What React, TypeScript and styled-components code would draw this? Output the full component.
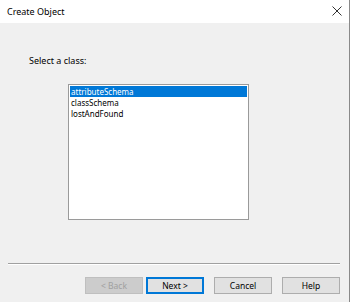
import styled, { createGlobalStyle } from "styled-components"

const items = ["attributeSchema", "classSchema", "lostAndFound"]

export default function App() {
    return (
        <>
            <GlobalStyle />
            <Dialog>
                <TitleBar>
                    <Title>Create Object</Title>
                    <Close>
                        <svg width="10" height="10" viewBox="0 0 10 10">
                            <path d="M0.5 0.5 L9.5 9.5 M9.5 0.5 L0.5 9.5" stroke="#333" strokeWidth="1" fill="none" />
                        </svg>
                    </Close>
                </TitleBar>
                <Body>
                    <Label>Select a class:</Label>
                    <ListBox>
                        {items.map((item, i) => (
                            <Item key={item} selected={i === 0}>{item}</Item>
                        ))}
                    </ListBox>
                    <Spacer />
                    <Separator />
                    <Buttons>
                        <Button disabled>&lt; Back</Button>
                        <Button primary>Next &gt;</Button>
                        <Button>Cancel</Button>
                        <Button>Help</Button>
                    </Buttons>
                </Body>
            </Dialog>
        </>
    )
}

const GlobalStyle = createGlobalStyle`
    html, body {
        margin: 0;
        padding: 0;
        background: #f0f0f0;
    }
    body {
        font-family: "Noto Sans", "Open Sans", sans-serif;
    }
`

const Dialog = styled.div`
    width: 350px;
    height: 302px;
    display: flex;
    flex-direction: column;
    background: #f0f0f0;
    box-sizing: border-box;
    border-right: 1px solid #8a8a8a;
`

const TitleBar = styled.div`
    height: 23px;
    background: #ffffff;
    display: flex;
    align-items: center;
    justify-content: space-between;
    padding: 0 7px 0 7px;
    flex-shrink: 0;
`

const Title = styled.div`
    font-size: 9px;
    color: #000;
    margin-top: -1px;
`

const Close = styled.div`
    display: flex;
    margin-top: -1px;
`

const Body = styled.div`
    flex: 1;
    display: flex;
    flex-direction: column;
`

const Label = styled.div`
    margin: 31px 0 0 29px;
    font-size: 9px;
    color: #000;
`

const ListBox = styled.div`
    margin: 17px 0 0 68px;
    width: 181px;
    height: 136px;
    box-sizing: border-box;
    border: 1px solid #9a9a9a;
    background: #fff;
    padding: 1px 1px;
`

const Item = styled.div<{ selected?: boolean }>`
    height: 11px;
    line-height: 11px;
    font-size: 8px;
    padding-left: 1px;
    color: ${p => (p.selected ? "#fff" : "#000")};
    background: ${p => (p.selected ? "#0078d7" : "transparent")};
`

const Spacer = styled.div`
    flex: 1;
`

const Separator = styled.div`
    margin: 0 9px 0 8px;
    height: 1px;
    background: #a0a0a0;
    border-bottom: 1px solid #fff;
`

const Buttons = styled.div`
    display: flex;
    justify-content: flex-end;
    padding: 12px 9px 8px 0;
    gap: 10px;
`

const Button = styled.button<{ primary?: boolean }>`
    width: 58px;
    height: 17px;
    box-sizing: border-box;
    font-family: "Noto Sans", "Open Sans", sans-serif;
    font-size: 8.5px;
    padding: 0;
    color: #000;
    background: #e1e1e1;
    border: 1px solid ${p => (p.primary ? "#0078d7" : "#adadad")};
    box-shadow: ${p => (p.primary ? "inset 0 0 0 1px #0078d7" : "none")};
    margin-left: ${p => (p.primary ? "-7px" : "0")};
    &:disabled {
        background: #cccccc;
        border-color: #bfbfbf;
        color: #a0a0a0;
    }
`
